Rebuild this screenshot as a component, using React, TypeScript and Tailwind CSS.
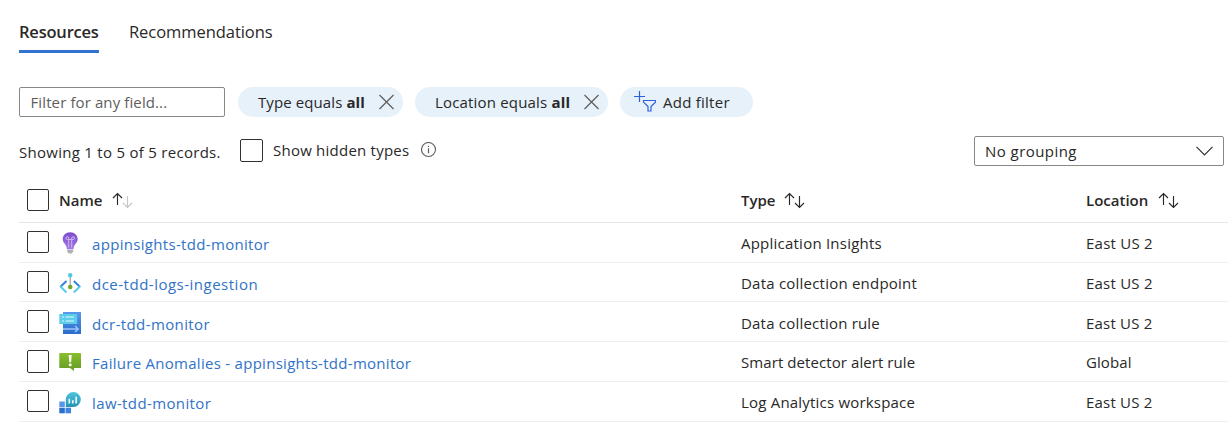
import React from "react";

const ink = "#292827";

function Checkbox({ className = "size-[22px]" }: { className?: string }) {
  return <span className={`block shrink-0 rounded-[2px] border border-[#323130] bg-white ${className}`} />;
}

function CloseIcon() {
  return (
    <svg width="16" height="16" viewBox="0 0 16 16" fill="none" stroke="#605e5c" strokeWidth="1.2">
      <path d="M.5 1l14 14M14.500 1L.5 15" />
    </svg>
  );
}

function SortIcon({ faded = false }: { faded?: boolean }) {
  return (
    <svg width="22" height="17" viewBox="0 0 22 17" fill="none" stroke={ink} strokeWidth="1.15">
      <path d="M5.5 13V1.6M1 6l4.5-4.5L10 6" />
      <path d="M15.500 4v11.400M11 11l4.500 4.500 4.500-4.500" stroke={faded ? "#c8c6c4" : ink} />
    </svg>
  );
}

function FilterAddIcon() {
  return (
    <svg width="22" height="21" viewBox="0 0 22 21" fill="none" stroke="#2f5fe0" strokeWidth="1.2">
      <path d="M5.500 0v11M0 5.500h11" />
      <path d="M9.500 9.500h12v1.600l-4.500 4.400v4.500h-3v-4.500l-4.500-4.400z" />
    </svg>
  );
}

function InfoIcon() {
  return (
    <svg width="16" height="16" viewBox="0 0 16 16" fill="none" stroke="#605e5c">
      <circle cx="7.5" cy="7.5" r="7" strokeWidth="1.1" />
      <path d="M7.500 6.300v5M7.500 3.700v1.400" strokeWidth="1.200" />
    </svg>
  );
}

function BulbIcon() {
  return (
    <svg width="22" height="22" viewBox="0 0 22 22">
      <defs>
        <linearGradient id="bulb" x1="0" y1="0" x2="0" y2="1">
          <stop offset="0" stopColor="#7d4bcb" />
          <stop offset="1" stopColor="#a478e6" />
        </linearGradient>
      </defs>
      <path d="M11.200 .2c-4.300 0-7.500 3-7.500 7 0 3.700 4 5.300 4 9 0 .7.4 1 1 1h5c.6 0 1-.3 1-1 0-3.700 4-5.300 4-9 0-4-3.200-7-7.500-7z" fill="url(#bulb)" />
      <path d="M9.700 15.500V8M12.700 15.500V8M9.700 7.500H8.400a1.400 1.400 0 1 1 1.300-1.400v1.400h3V6.100a1.400 1.400 0 1 1 1.300 1.400h-1.300" fill="none" stroke="#dcc6f8" strokeWidth=".8" />
      <path d="M8.200 17.700h6v1.800l-1.500 2h-3l-1.500-2z" fill="#b0b0b0" />
    </svg>
  );
}

function EndpointIcon() {
  return (
    <svg width="22" height="22" viewBox="0 0 22 22" fill="none">
      <path d="M7.500 9L1.200 15" stroke="#2f82dc" strokeWidth="1.900" />
      <path d="M1.200 14.300L7.500 20.500" stroke="#54cbe9" strokeWidth="1.900" />
      <path d="M14.800 9l6.300 6" stroke="#2f82dc" strokeWidth="1.900" />
      <path d="M21.100 14.300L14.800 20.500" stroke="#54cbe9" strokeWidth="1.900" />
      <path d="M11.200 3v12" stroke="#9b9b9b" strokeWidth="1.100" />
      <circle cx="11.200" cy="3.300" r="2.200" fill="#4fc8e5" />
      <circle cx="11.200" cy="15" r="2.300" fill="#70a82b" />
    </svg>
  );
}

function RuleIcon() {
  return (
    <svg width="22" height="22" viewBox="0 0 22 22">
      <defs>
        <linearGradient id="rule" x1="0" y1="0" x2="0" y2="1">
          <stop offset="0" stopColor="#5a98ec" />
          <stop offset="1" stopColor="#2a6dca" />
        </linearGradient>
      </defs>
      <path d="M4 0h18v22H4z" fill="url(#rule)" />
      <path d="M.3 2h17.900v10H.3z" fill="#5bcdeb" />
      <path d="M3 5h2M3 9h2M6.500 5h8.500M6.500 9h8.500" stroke="#e4faff" strokeWidth="1.200" />
      <path d="M4 17h15M16 14l3.300 3-3.300 3" fill="none" stroke="#9cc7fb" strokeWidth="1.400" />
    </svg>
  );
}

function AlertIcon() {
  return (
    <svg width="22" height="22" viewBox="0 0 22 22">
      <defs>
        <linearGradient id="alert" x1="0" y1="0" x2="0" y2="1">
          <stop offset="0" stopColor="#87bf2d" />
          <stop offset="1" stopColor="#659a25" />
        </linearGradient>
      </defs>
      <path d="M.8 2h20.700q.5 0 .5.500v14q0 .500-.500.500H15v3l-4-3H.8q-.5 0-.5-.500v-14Q.3 2 .8 2z" fill="url(#alert)" />
      <path d="M9.700 4h3l-.600 7.200h-1.800z" fill="#fff" />
      <circle cx="11.200" cy="13.700" r="1.500" fill="#fff" />
    </svg>
  );
}

function WorkspaceIcon() {
  return (
    <svg width="22" height="22" viewBox="0 0 22 22">
      <defs>
        <linearGradient id="logs" x1="0" y1="0" x2="0" y2="1">
          <stop offset="0" stopColor="#50c6de" />
          <stop offset="1" stopColor="#2593b4" />
        </linearGradient>
      </defs>
      <path d="M.3 9.500h5.500V15H.3z" fill="#5797eb" />
      <path d="M.3 15.700h5.500v5.600H.3z" fill="#276fcb" />
      <path d="M6.500 15.700h5.500v5.600H6.500z" fill="#3e83df" />
      <path d="M14.300 0a7.500 7.500 0 0 1 0 15H6.800V7.500A7.500 7.500 0 0 1 14.300 0z" fill="url(#logs)" />
      <path d="M10.300 11.500V6.800M13.800 11.500V8.300M17.200 11.500V4.800" stroke="#eefcff" strokeWidth="1.700" />
    </svg>
  );
}

const rows = [
  { name: "appinsights-tdd-monitor", type: "Application Insights", location: "East US 2", Icon: BulbIcon, box: "h-10", check: "size-[22px]", iconCls: "pt-[9px]", nameCls: "pt-[11px] tracking-[0.32px]", typeCls: "pt-[10px] tracking-[0.23px]" },
  { name: "dce-tdd-logs-ingestion", type: "Data collection endpoint", location: "East US 2", Icon: EndpointIcon, box: "h-[39px]", check: "size-[22px]", iconCls: "pt-[9px]", nameCls: "pt-[11px] tracking-[0.5px]", typeCls: "pt-[10px] tracking-[0.22px]" },
  { name: "dcr-tdd-monitor", type: "Data collection rule", location: "East US 2", Icon: RuleIcon, box: "h-10", check: "h-[23px] w-[22px]", iconCls: "pt-[10px]", nameCls: "pt-[12px] tracking-[0.38px]", typeCls: "pt-[11px] tracking-[0.2px]" },
  { name: "Failure Anomalies - appinsights-tdd-monitor", type: "Smart detector alert rule", location: "Global", Icon: AlertIcon, box: "h-10", check: "h-[23px] w-[22px]", iconCls: "pt-[9px]", nameCls: "pt-[11px] tracking-[0.28px]", typeCls: "pt-[10px] tracking-[0.08px]" },
  { name: "law-tdd-monitor", type: "Log Analytics workspace", location: "East US 2", Icon: WorkspaceIcon, box: "h-10", check: "size-[22px]", iconCls: "pt-[10px]", nameCls: "pt-[11px] tracking-[0.38px]", typeCls: "pt-[10px] tracking-[0.2px]" },
];

export default function App() {
  return (
    <main className="h-[448px] w-[1228px] overflow-hidden bg-white pl-[19px] font-['Open_Sans',sans-serif] text-[15px] leading-5 whitespace-nowrap text-[#292827]">
      <nav className="flex h-[53px] items-end gap-[30px] text-[16.500px]">
        <div className="h-[31px] w-[80px] border-b-[3px] border-[#3173d0] font-semibold tracking-[-0.2px]">Resources</div>
        <div className="h-[31px] tracking-[-0.06px]">Recommendations</div>
      </nav>

      <div className="mt-[34px] flex h-[30px]">
        <div className="flex w-[206px] items-center rounded-[2px] border border-[#8a8886] pl-[10.500px] tracking-[0.11px] text-[#605e5c]">Filter for any field...</div>
        <div className="ml-[13px] flex w-[165px] items-center justify-between rounded-full bg-[#e6f1fa] pr-[8px] pl-[20px]">
          <span className="tracking-[0.1px]">Type equals <b>all</b></span>
          <CloseIcon />
        </div>
        <div className="ml-3 flex w-[193px] items-center justify-between rounded-full bg-[#e6f1fa] pr-[8px] pl-[20px]">
          <span className="tracking-[0.18px]">Location equals <b>all</b></span>
          <CloseIcon />
        </div>
        <div className="ml-3 flex w-[133px] items-center gap-[7px] rounded-full bg-[#e6f1fa] pl-[14px]">
          <span className="shrink-0 pb-px"><FilterAddIcon /></span>
          <span className="tracking-[0.25px]">Add filter</span>
        </div>
      </div>

      <div className="mt-[19px] flex h-[30px] items-start">
        <span className="w-[221px] pt-[6px] tracking-[0.28px]">Showing 1 to 5 of 5 records.</span>
        <Checkbox className="mt-[3px] size-[23px]" />
        <span className="ml-[10px] w-[148px] pt-[4px] tracking-[0.23px]">Show hidden types</span>
        <span className="pt-[6px]"><InfoIcon /></span>
        <div className="ml-auto mr-1 flex h-[30px] w-[250px] items-center justify-between rounded-[2px] border border-[#8a8886] pr-[10px] pl-[10px]">
          <span className="tracking-[0.45px]">No grouping</span>
          <svg width="17" height="10" viewBox="0 0 17 10" fill="none" stroke="#323130" strokeWidth="1.200"><path d="M.5.8l8 8 8-8" /></svg>
        </div>
      </div>

      <div className="mt-[12px] flex h-[45px] items-center border-b border-[#e7e6e5] pl-2 font-semibold">
        <Checkbox />
        <div className="ml-[10px] flex w-[682px] items-center gap-[10px]">Name <SortIcon faded /></div>
        <div className="flex w-[345px] items-center gap-[9px]">Type <SortIcon /></div>
        <div className="flex items-center gap-[10px]">Location <SortIcon /></div>
      </div>
      {rows.map(({ name, type, location, Icon, box, check, iconCls, nameCls, typeCls }) => (
        <div key={name} className={`flex items-start border-b border-[#f0efee] pl-2 ${box}`}>
          <span className="pt-2"><Checkbox className={check} /></span>
          <div className="ml-[10px] flex w-[682px] items-start gap-[11px]">
            <span className={iconCls}><Icon /></span>
            <a className={`text-[#3173c8] ${nameCls}`}>{name}</a>
          </div>
          <span className={`w-[345px] ${typeCls}`}>{type}</span>
          <span className={typeCls}>{location}</span>
        </div>
      ))}
    </main>
  );
}
